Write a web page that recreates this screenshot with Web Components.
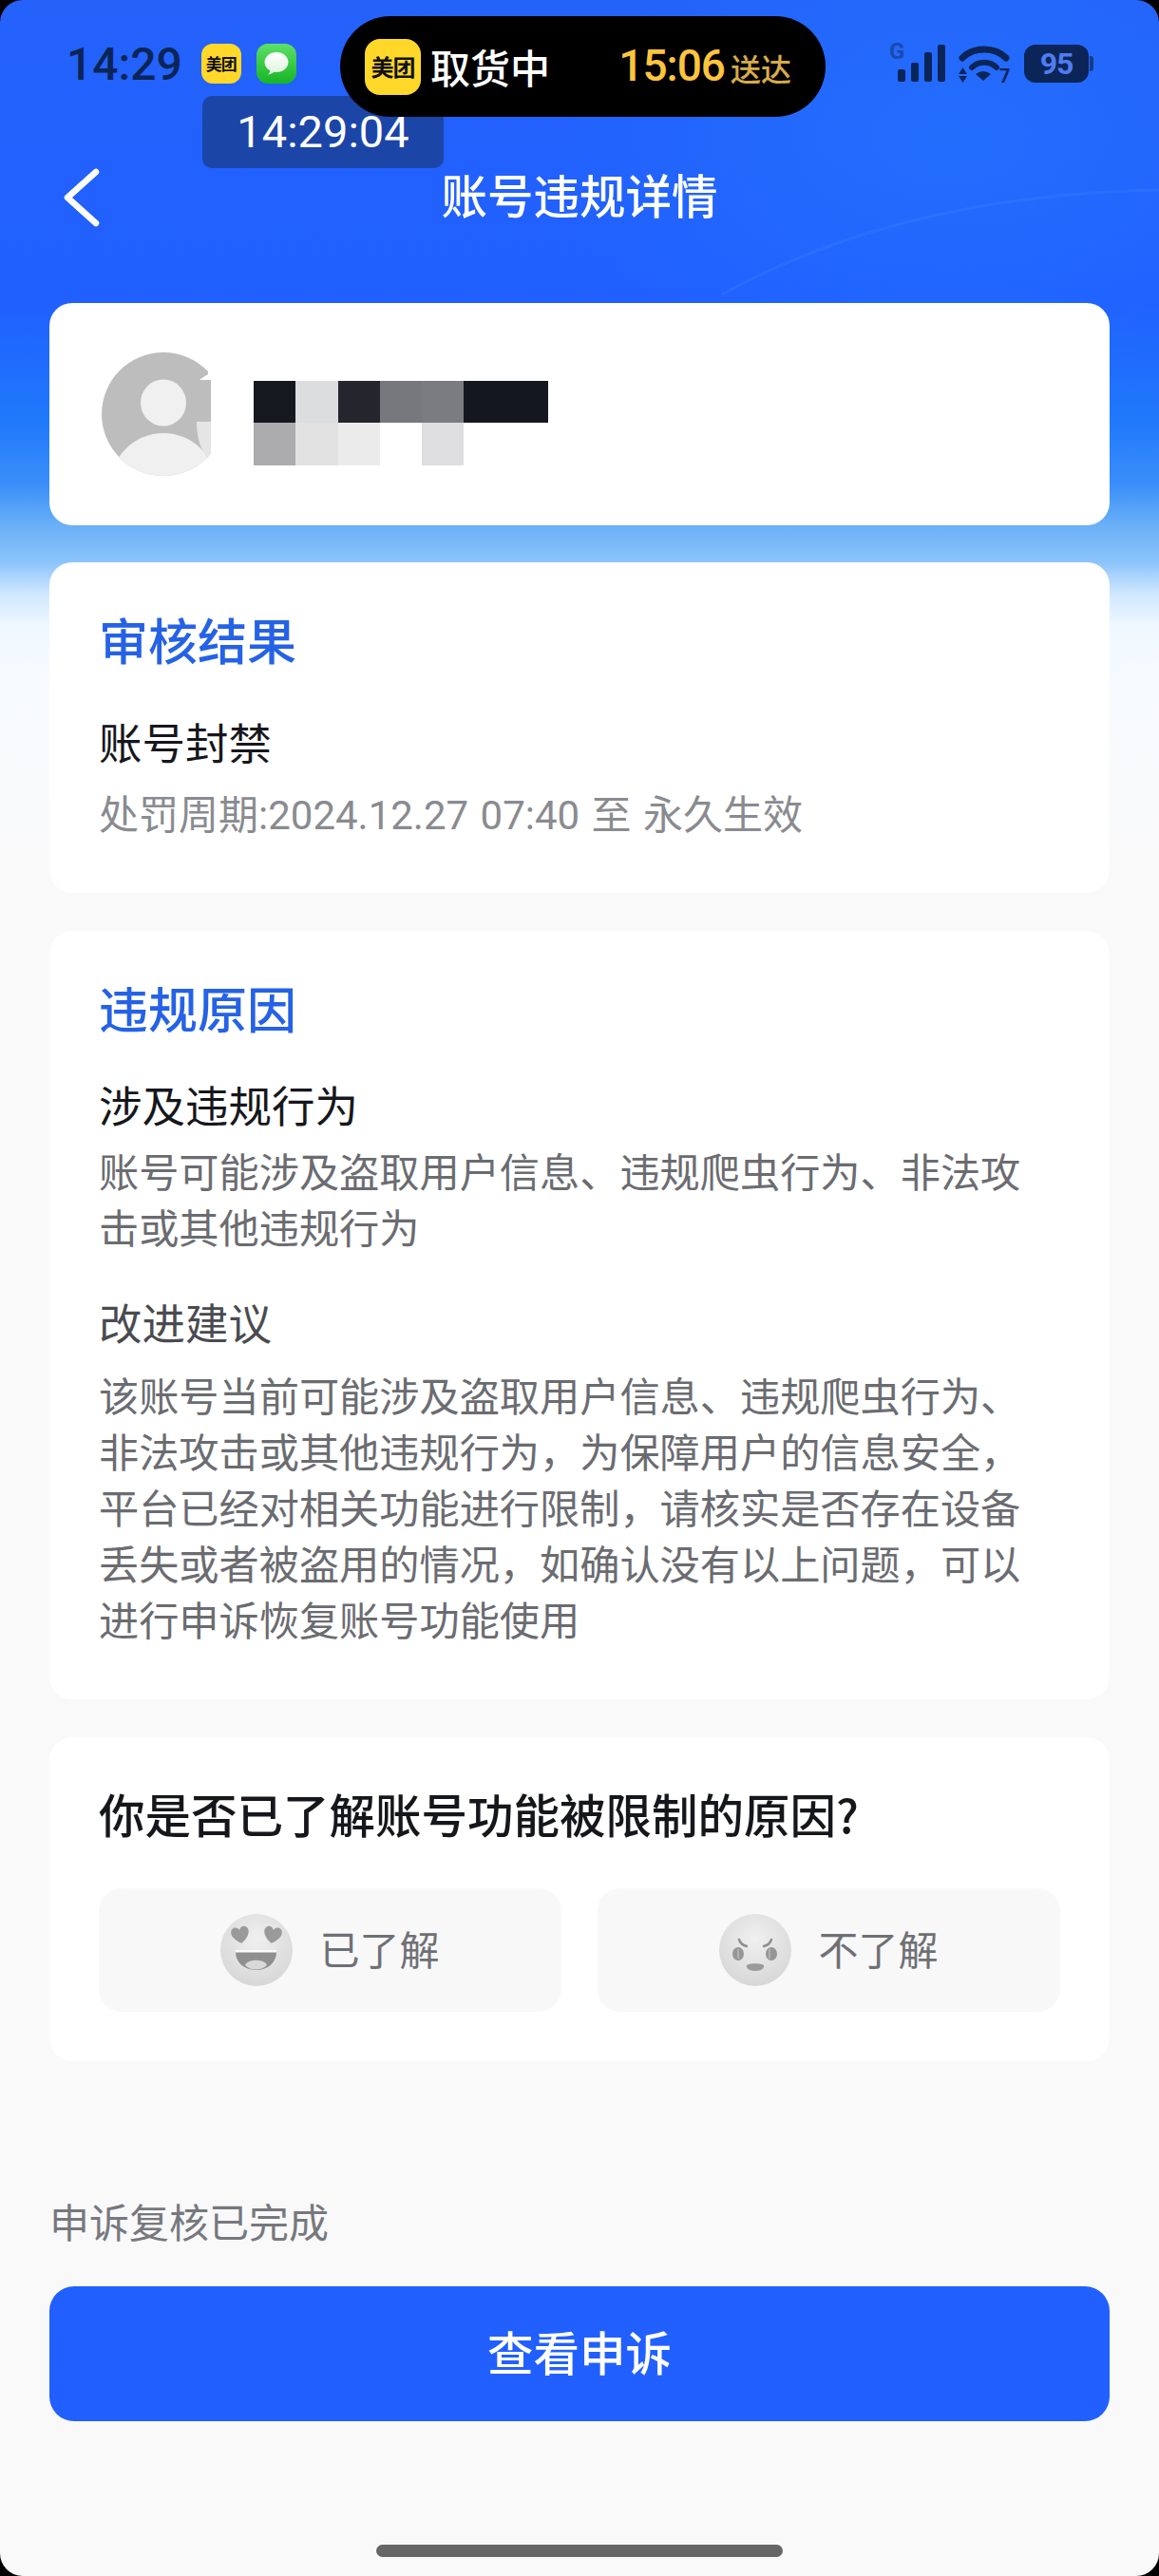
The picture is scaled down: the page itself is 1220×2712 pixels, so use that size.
<!DOCTYPE html>
<html lang="zh-CN">
<head>
<meta charset="utf-8">
<title>账号违规详情</title>
<style>
  html, body { margin: 0; padding: 0; background: #000; }
  body { font-family: Roboto, "Noto Sans CJK SC", sans-serif; }
</style>
</head>
<body>
<phone-page>
  <status-bar></status-bar>
  <nav-bar>账号违规详情</nav-bar>
  <user-card></user-card>

  <info-card heading="审核结果">
    <info-block tone="strong" first>账号封禁</info-block>
    <info-text tone="muted" style="--gap:19px">处罚周期:2024.12.27 07:40 至 永久生效</info-text>
  </info-card>

  <info-card heading="违规原因" style="--pad-bottom:56px">
    <info-block tone="strong">涉及违规行为</info-block>
    <info-text style="--gap:10px">账号可能涉及盗取用户信息、违规爬虫行为、非法攻击或其他违规行为</info-text>
    <info-block>改进建议</info-block>
    <info-text style="--gap:17px">该账号当前可能涉及盗取用户信息、违规爬虫行为、非法攻击或其他违规行为，为保障用户的信息安全，平台已经对相关功能进行限制，请核实是否存在设备丢失或者被盗用的情况，如确认没有以上问题，可以进行申诉恢复账号功能使用</info-text>
  </info-card>

  <feedback-card question="你是否已了解账号功能被限制的原因?">
    <feedback-option mood="happy">已了解</feedback-option>
    <feedback-option mood="angry">不了解</feedback-option>
  </feedback-card>

  <appeal-footer note="申诉复核已完成">查看申诉</appeal-footer>
  <home-indicator></home-indicator>
</phone-page>

<script>
(function (document) {
  'use strict';

  class PhonePage extends HTMLElement {
    constructor() {
      super();
      const shadowRoot = this.attachShadow({ mode: 'open' });
      shadowRoot.innerHTML = `
        <style>
          :host {
            display: block;
            position: relative;
            width: 1220px;
            height: 2712px;
            box-sizing: border-box;
            overflow: hidden;
            border-radius: 24px;
            background:
              radial-gradient(ellipse 420px 260px at 1000px 150px, rgba(36,130,255,.38), rgba(36,130,255,0)),
              linear-gradient(180deg, #2462fa 0, #2060ff 320px, #2078fb 440px, #3a8ef9 510px, #6ab0f7 553px, #8cc4fb 592px, #cfe7fe 625px, #f0f8ff 660px, #f8fbfe 740px, #f9f9fa 900px);
          }
          svg { position: absolute; left: 0; top: 0; pointer-events: none; }
        </style>
        <svg width="1220" height="400" viewBox="0 0 1220 400" fill="none">
          <path d="M760 310Q950 205 1220 200" stroke="#5aa2ff" stroke-opacity=".14" stroke-width="3"/>
        </svg>
        <slot></slot>
      `;
    }
  }

  class StatusBar extends HTMLElement {
    constructor() {
      super();
      const shadowRoot = this.attachShadow({ mode: 'open' });
      shadowRoot.innerHTML = `
        <style>
          :host {
            display: flex;
            position: relative;
            align-items: center;
            box-sizing: border-box;
            height: 130px;
            padding: 36px 74px 32px 70px;
            color: #0c2558;
          }
          .clock { font-size: 48px; font-weight: 500; line-height: 60px; margin: 2px 20px 0 0; }
          .app {
            display: flex; align-items: center; justify-content: center;
            width: 42px; height: 42px; border-radius: 12px; flex: none;
          }
          .mt {
            background: #ffd82a; color: #111;
            font-family: "Noto Sans CJK SC", sans-serif; font-weight: 700;
            font-size: 17px; letter-spacing: -1px; line-height: 24px;
          }
          .msg { margin-left: 16px; background: linear-gradient(180deg, #5fe06a, #15b424); }
          .right { display: flex; align-items: center; margin-left: auto; }
          .net { position: relative; width: 60px; height: 44px; }
          .net b { position: absolute; left: 0; top: -5px; font-size: 24px; line-height: 28px; font-weight: 700; color: #1a4aad; }
          .net svg { position: absolute; left: 0; top: 0; }
          .wifi { margin-left: 13px; }
          .seven { font: 700 20px Roboto, sans-serif; fill: #0c2558; }
          .battery {
            display: flex; align-items: center; justify-content: center;
            width: 68px; height: 40px; margin-left: 15px; border-radius: 12px;
            background: #0c2558; color: #4f7df0;
            font-size: 32px; font-weight: 700; line-height: 40px; letter-spacing: -1px; position: relative;
          }
          .battery::after {
            content: ""; position: absolute; right: -5px; top: 12px;
            width: 4px; height: 16px; border-radius: 0 3px 3px 0; background: #173a86;
          }
          .clock-tip {
            position: absolute; left: 213px; top: 101px;
            display: flex; align-items: center; justify-content: center;
            width: 254px; height: 76px; border-radius: 10px;
            background: #1c45a8; color: #fff;
            font-size: 47px; font-weight: 400; line-height: 60px;
          }
          .island {
            position: absolute; left: 358px; top: 17px;
            display: flex; align-items: center;
            box-sizing: border-box; width: 511px; height: 106px;
            padding: 0 36px 0 26px; border-radius: 53px;
            background: #000; color: #fff;
          }
          .island .mt { width: 59px; height: 59px; border-radius: 16px; font-size: 24px; line-height: 30px; }
          .island .state { margin-left: 10px; font-size: 42px; font-weight: 500; line-height: 60px; font-family: "Noto Sans CJK SC", sans-serif; }
          .island .eta { margin-left: auto; display: flex; align-items: baseline; color: #fcc53c; font-size: 46px; font-weight: 500; letter-spacing: -1px; line-height: 60px; }
          .island .eta span { margin-left: 6px; font-size: 32px; letter-spacing: 0; color: #d6ab4b; font-family: "Noto Sans CJK SC", sans-serif; }
        </style>
        <span class="clock">14:29</span>
        <span class="app mt">美团</span>
        <span class="app msg">
          <svg width="30" height="30" viewBox="0 0 30 30">
            <defs><linearGradient id="bubble" x1="0" y1="0" x2="0" y2="1"><stop offset="0" stop-color="#fff"/><stop offset="1" stop-color="#dcf3dc"/></linearGradient></defs>
            <path d="M15 3C8 3 2.500 7.700 2.500 13.500c0 3.800 2.300 7 5.900 8.900-.3 1.500-1.200 3-2.400 4.100 2.500-.2 4.800-1.200 6.500-2.700.8.100 1.600.2 2.500.2 7 0 12.500-4.700 12.500-10.500S22 3 15 3Z" fill="url(#bubble)"/>
          </svg>
        </span>
        <div class="right">
          <div class="net">
            <b>G</b>
            <svg width="60" height="44" viewBox="0 0 60 44" fill="#0c2558">
              <rect x="9" y="28" width="8" height="13" rx="2"/>
              <rect x="23" y="21" width="8" height="20" rx="2"/>
              <rect x="37" y="10" width="8" height="31" rx="2"/>
              <rect x="51" y="2" width="8" height="39" rx="2"/>
            </svg>
          </div>
          <svg class="wifi" width="54" height="46" viewBox="0 0 54 46" fill="none">
            <path d="M4 17C16 5 38 5 50 17" stroke="#0c2558" stroke-width="7" stroke-linecap="round"/>
            <path d="M14 27C21 20 33 20 40 27" stroke="#0c2558" stroke-width="6" stroke-linecap="round"/>
            <path d="M18 34Q26 28 34 34L26 41Z" fill="#0c2558"/>
            <path d="M0 34h9l-4.500-7zM0 36h9l-4.500 7z" fill="#0c2558"/>
            <text class="seven" x="43" y="43">7</text>
          </svg>
          <div class="battery">95</div>
        </div>
        <div class="clock-tip">14:29:04</div>
        <div class="island">
          <span class="app mt">美团</span>
          <span class="state">取货中</span>
          <span class="eta">15:06<span>送达</span></span>
        </div>
      `;
    }
  }

  class NavBar extends HTMLElement {
    constructor() {
      super();
      const shadowRoot = this.attachShadow({ mode: 'open' });
      shadowRoot.innerHTML = `
        <style>
          :host {
            display: flex;
            position: relative;
            align-items: center;
            justify-content: center;
            box-sizing: border-box;
            height: 154px;
            padding-bottom: 6px;
            margin-bottom: 35px;
            color: #fff;
            font-size: 48.5px;
            font-weight: 500;
            font-family: "Noto Sans CJK SC", sans-serif;
            line-height: 60px;
          }
          svg { position: absolute; left: 64px; top: 44px; }
        </style>
        <svg width="44" height="68" viewBox="0 0 44 68" fill="none">
          <path d="M37 7L7 34l30 27" stroke="#fff" stroke-width="6.500" stroke-linecap="round" stroke-linejoin="round"/>
        </svg>
        <slot></slot>
      `;
    }
  }

  class UserCard extends HTMLElement {
    constructor() {
      super();
      const top = ['#16181f', '#dcdddf', '#24252d', '#77787d', '#7b7c80', '#151720', '#151720'];
      const bottom = ['#acacae', '#e2e2e3', '#ebebec', '#fff', '#dedee0', '#fff', '#fff'];
      const cells = top.concat(bottom).map(c => `<i style="background:${c}"></i>`).join('');
      const shadowRoot = this.attachShadow({ mode: 'open' });
      shadowRoot.innerHTML = `
        <style>
          :host {
            display: flex;
            align-items: center;
            box-sizing: border-box;
            height: 234px;
            margin: 0 52px 39px;
            padding-left: 55px;
            background: #fff;
            border-radius: 24px;
          }
          .mosaic {
            display: grid;
            grid-template-columns: repeat(7, 44.300px);
            grid-template-rows: 44.500px 44.500px;
            margin: 18px 0 0 45px;
          }
          .mosaic i { display: block; }
        </style>
        <svg width="115" height="130" viewBox="107 371 115 130">
          <defs><clipPath id="round"><circle cx="172" cy="436" r="65"/></clipPath></defs>
          <g clip-path="url(#round)">
            <rect x="107" y="371" width="115" height="130" fill="#bdbdbd"/>
            <circle cx="172" cy="512" r="56" fill="#f0f0f0"/>
            <path d="M207 444h15v38h-4c-8-10-11-24-11-38Z" fill="#e5e5e5"/>
          </g>
          <ellipse cx="172" cy="424" rx="24" ry="24.500" fill="#f0f0f0"/>
          <path d="M218 371h4v29h-12l4-3 5-3z" fill="#fff"/>
        </svg>
        <div class="mosaic">${cells}</div>
      `;
    }
  }

  class InfoCard extends HTMLElement {
    constructor() {
      super();
      const shadowRoot = this.attachShadow({ mode: 'open' });
      shadowRoot.innerHTML = `
        <style>
          :host {
            display: block;
            box-sizing: border-box;
            margin: 0 52px 40px;
            padding: 46px 52px var(--pad-bottom, 52px);
            background: #fff;
            border-radius: 24px;
            font-family: "Noto Sans CJK SC", sans-serif;
          }
          h2 { margin: 0; font-size: 52px; font-weight: 500; line-height: 70px; color: #2562e6; }
        </style>
        <h2></h2>
        <slot></slot>
      `;
      shadowRoot.querySelector('h2').textContent = this.getAttribute('heading');
    }
  }

  class InfoBlock extends HTMLElement {
    constructor() {
      super();
      const shadowRoot = this.attachShadow({ mode: 'open' });
      shadowRoot.innerHTML = `
        <style>
          :host {
            display: block;
            margin-top: 41px;
            font-size: 45.5px;
            line-height: 60px;
            color: #4a4b50;
          }
          :host([tone="strong"]) { margin-top: 36px; color: #16171c; }
          :host([first]) { margin-top: 42px; }
        </style>
        <slot></slot>
      `;
    }
  }

  class InfoText extends HTMLElement {
    constructor() {
      super();
      const shadowRoot = this.attachShadow({ mode: 'open' });
      shadowRoot.innerHTML = `
        <style>
          :host {
            display: block;
            width: 980px;
            margin-top: var(--gap, 15px);
            font-size: 42.2px;
            line-height: 59px;
            color: #6b6c71;
          }
          :host([tone="muted"]) {
            font-family: Roboto, "Noto Sans CJK SC", sans-serif;
            font-size: 42px;
            word-spacing: 2px;
            color: #8a8b90;
          }
        </style>
        <slot></slot>
      `;
    }
  }

  class FeedbackCard extends HTMLElement {
    constructor() {
      super();
      const shadowRoot = this.attachShadow({ mode: 'open' });
      shadowRoot.innerHTML = `
        <style>
          :host {
            display: block;
            box-sizing: border-box;
            margin: 0 52px;
            padding: 45px 52px 52px;
            background: #fff;
            border-radius: 24px;
            font-family: "Noto Sans CJK SC", sans-serif;
          }
          p { margin: 0 0 44px; font-size: 48.5px; font-weight: 500; line-height: 70px; color: #16171c; }
          .options { display: grid; grid-template-columns: 1fr 1fr; gap: 38px; }
        </style>
        <p></p>
        <div class="options"><slot></slot></div>
      `;
      shadowRoot.querySelector('p').textContent = this.getAttribute('question');
    }
  }

  const HEART = 'M0 9C-9 3-11-3-8-7-5-10-1-8 0-5 1-8 5-10 8-7 11-3 9 3 0 9Z';
  const FACES = {
    happy: `
      <path d="${HEART}" transform="translate(21 22) rotate(-10)" fill="#9a9a9a"/>
      <path d="${HEART}" transform="translate(55 22) rotate(10)" fill="#9a9a9a"/>
      <path d="M16 40h43c0 11-9 19-21.500 19S16 51 16 40Z" fill="#8f8f8f"/>
      <rect x="16" y="38" width="43" height="2.500" fill="#fbfbfb"/>
      <path d="M26 54c2-7 21-7 23 0-6 6-17 6-23 0Z" fill="#d8d8d8"/>
    `,
    angry: `
      <path d="M21 27c1 3 4 6 8 7" stroke="#8f8f8f" stroke-width="2.500" fill="none" stroke-linecap="round"/>
      <path d="M55 27c-1 3-4 6-8 7" stroke="#8f8f8f" stroke-width="2.500" fill="none" stroke-linecap="round"/>
      <ellipse cx="20" cy="42" rx="6" ry="7" fill="#969696"/>
      <ellipse cx="55" cy="42" rx="6" ry="7" fill="#969696"/>
      <path d="M20 37v10M53 37v10" stroke="#c4c4c4" stroke-width="1.200"/>
      <path d="M29 54c2-2.500 16-2.500 18 0 1 3-3 6-9 6s-10-3-9-6Z" fill="#9a9a9a"/>
    `
  };

  class FeedbackOption extends HTMLElement {
    constructor() {
      super();
      const mood = this.getAttribute('mood');
      const shadowRoot = this.attachShadow({ mode: 'open' });
      shadowRoot.innerHTML = `
        <style>
          :host {
            display: flex;
            align-items: center;
            justify-content: center;
            gap: 28px;
            height: 130px;
            background: #f8f8f9;
            border-radius: 24px;
            font-size: 42px;
            line-height: 60px;
            color: #6f7075;
          }
          .label { margin-bottom: 5px; }
        </style>
        <svg width="76" height="76" viewBox="0 0 76 76">
          <defs>
            <radialGradient id="skin" cx=".5" cy=".35" r=".7">
              <stop offset="0" stop-color="#f0f0f0"/><stop offset="1" stop-color="#d5d5d5"/>
            </radialGradient>
          </defs>
          <circle cx="38" cy="38" r="38" fill="url(#skin)"/>
          ${FACES[mood]}
        </svg>
        <span class="label"><slot></slot></span>
      `;
    }
  }

  class AppealFooter extends HTMLElement {
    constructor() {
      super();
      const shadowRoot = this.attachShadow({ mode: 'open' });
      shadowRoot.innerHTML = `
        <style>
          :host {
            display: block;
            margin: 138px 52px 0;
            font-family: "Noto Sans CJK SC", sans-serif;
          }
          .note { font-size: 42px; line-height: 60px; color: #77787d; }
          button {
            display: flex;
            align-items: center;
            justify-content: center;
            box-sizing: border-box;
            width: 100%;
            height: 142px;
            margin-top: 39px;
            padding: 0 0 6px;
            border: 0;
            border-radius: 26px;
            background: #2160ff;
            color: #fff;
            font: 500 48.5px "Noto Sans CJK SC", sans-serif;
          }
        </style>
        <div class="note"></div>
        <button type="button"><slot></slot></button>
      `;
      shadowRoot.querySelector('.note').textContent = this.getAttribute('note');
    }
  }

  class HomeIndicator extends HTMLElement {
    constructor() {
      super();
      const shadowRoot = this.attachShadow({ mode: 'open' });
      shadowRoot.innerHTML = `
        <style>
          :host {
            display: block;
            width: 428px;
            height: 13px;
            margin: 130px auto 0;
            border-radius: 7px;
            background: #666;
          }
        </style>
      `;
    }
  }

  customElements.define('phone-page', PhonePage);
  customElements.define('status-bar', StatusBar);
  customElements.define('nav-bar', NavBar);
  customElements.define('user-card', UserCard);
  customElements.define('info-card', InfoCard);
  customElements.define('info-block', InfoBlock);
  customElements.define('info-text', InfoText);
  customElements.define('feedback-card', FeedbackCard);
  customElements.define('feedback-option', FeedbackOption);
  customElements.define('appeal-footer', AppealFooter);
  customElements.define('home-indicator', HomeIndicator);
})(document);
</script>
</body>
</html>
